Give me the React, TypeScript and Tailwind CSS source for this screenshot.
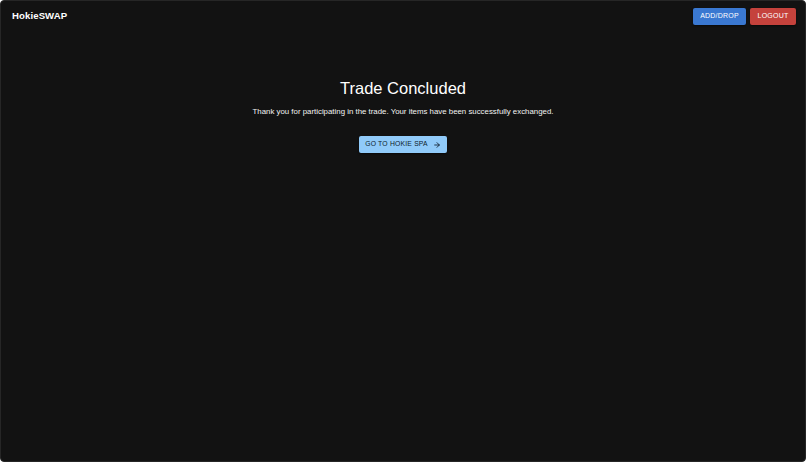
import React from 'react';
import { ArrowRight } from 'lucide-react';

const font = { fontFamily: '"Liberation Sans", Arial, sans-serif' };

export default function App() {
  return (
    <div
      className="w-full h-[462px] bg-[#121212] text-white border border-[#262626] rounded-[4px] flex flex-col overflow-hidden"
      style={font}
    >
      {/* Header */}
      <header className="flex items-center justify-between pl-[11px] pr-[9px] pt-[6px] h-[25px]">
        <div className="text-[9.6px] font-bold tracking-[0.1px]">HokieSWAP</div>
        <div className="flex items-center gap-[4px]">
          <button className="h-[17px] w-[53px] rounded-[2px] bg-[#3a78d1] text-[7px] font-medium tracking-[0.2px] shadow-[0_1px_2px_rgba(0,0,0,0.5)]">
            ADD/DROP
          </button>
          <button className="h-[17px] w-[46px] rounded-[2px] bg-[#c5423c] text-[7px] font-medium tracking-[0.2px] shadow-[0_1px_2px_rgba(0,0,0,0.5)]">
            LOGOUT
          </button>
        </div>
      </header>

      {/* Content */}
      <main className="flex flex-col items-center pt-[52px]">
        <h1 className="text-[16.5px] leading-[20px]">Trade Concluded</h1>
        <p className="mt-[9px] text-[7.85px] leading-[10px] text-[#f2f2f2]">
          Thank you for participating in the trade. Your items have been successfully exchanged.
        </p>
        <button className="mt-[19px] h-[17px] w-[88px] rounded-[2px] bg-[#90caf9] text-[#0d1b2a] text-[6.8px] font-medium tracking-[0.2px] flex items-center justify-center gap-[5px] shadow-[0_1px_2px_rgba(0,0,0,0.5)]">
          <span>GO TO HOKIE SPA</span>
          <ArrowRight size={8} strokeWidth={2.5} />
        </button>
      </main>
    </div>
  );
}
